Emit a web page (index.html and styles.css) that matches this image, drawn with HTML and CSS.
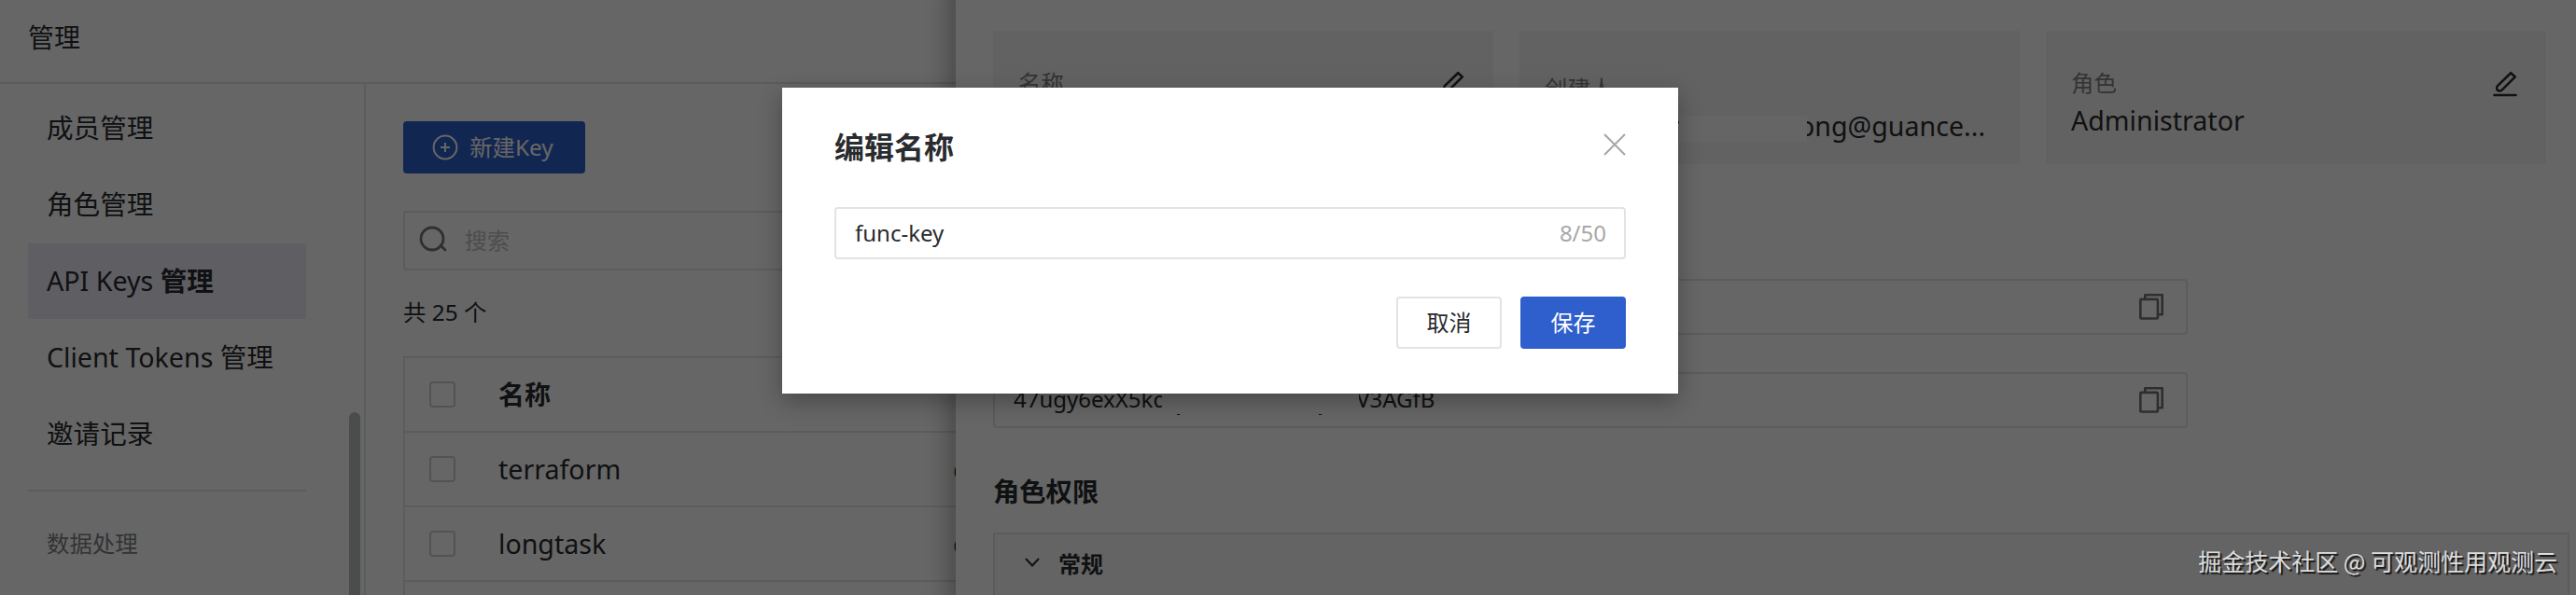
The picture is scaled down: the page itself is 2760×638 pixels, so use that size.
FILE: index.html
```html
<!DOCTYPE html>
<html lang="zh-CN">
	<head>
		<meta charset="UTF-8" />
		<meta name="viewport" content="width=device-width, initial-scale=1.0" />
		<title>API Keys 管理</title>
		<link rel="stylesheet" href="styles.css">
	</head>
	<body>
		<div class="page">
			<header class="header">管理</header>
			<div class="layout">
				<nav class="sidebar">
					<a class="menu-item">成员管理</a>
					<a class="menu-item">角色管理</a>
					<a class="menu-item active">API Keys <b>管理</b></a>
					<a class="menu-item">Client Tokens 管理</a>
					<a class="menu-item">邀请记录</a>
					<div class="menu-group">数据处理</div>
					<div class="scrollbar"></div>
				</nav>
				<main class="main">
					<button class="btn btn-primary btn-new">
						<svg width="28" height="28" viewBox="0 0 28 28" fill="none" stroke="currentColor" stroke-width="2">
							<circle cx="14" cy="14" r="12.4" />
							<path d="M9 14h10M14 9v10" />
						</svg>
						<span>新建Key</span>
					</button>
					<div class="search">
						<svg width="32" height="32" viewBox="0 0 32 32" fill="none" stroke="currentColor" stroke-width="2.8" stroke-linecap="round">
							<circle cx="15" cy="15" r="12" />
							<path d="M24 22l5 5" />
						</svg>
						<span>搜索</span>
					</div>
					<div class="total">共 25 个</div>
					<div class="table">
						<div class="row row-head"><i class="checkbox"></i><span class="cell">名称</span></div>
						<div class="row"><i class="checkbox"></i><span class="cell">terraform</span><span>c</span></div>
						<div class="row"><i class="checkbox"></i><span class="cell">longtask</span><span>c</span></div>
						<div class="row"></div>
					</div>
				</main>
			</div>
		</div>

		<aside class="drawer">
			<div class="cards">
				<div class="card">
					<div class="card-label">名称</div>
					<div class="card-value">func-key</div>
					<svg class="edit" width="26" height="28" viewBox="0 0 26 28" fill="none" stroke="currentColor" stroke-width="2.6" stroke-linejoin="round" stroke-linecap="round">
						<path d="M19.2 2.2l4.6 4.2L9.8 20.4q-1.2 1.2-3 1-2.8-.2-2.6-2.8 0-2 1.2-3z" />
						<path d="M1.5 26h23" />
					</svg>
				</div>
				<div class="card card-creator">
					<div class="card-label">创建人</div>
					<div class="card-value"><span class="card-name">r</span><span class="redacted"></span>ong@guance...</div>
				</div>
				<div class="card">
					<div class="card-label">角色</div>
					<div class="card-value">Administrator</div>
					<svg class="edit" width="26" height="28" viewBox="0 0 26 28" fill="none" stroke="currentColor" stroke-width="2.6" stroke-linejoin="round" stroke-linecap="round">
						<path d="M19.2 2.2l4.6 4.2L9.8 20.4q-1.2 1.2-3 1-2.8-.2-2.6-2.8 0-2 1.2-3z" />
						<path d="M1.5 26h23" />
					</svg>
				</div>
			</div>
			<div class="fields">
				<div class="field">
					<span></span>
					<svg class="copy" width="28" height="30" viewBox="0 0 28 30" fill="none" stroke="currentColor" stroke-width="2.6" stroke-linejoin="round">
						<path d="M7.3 6.4V2.3h18.4v21h-4.4" />
						<rect x="2.3" y="6.9" width="18.6" height="20.6" rx="1" />
					</svg>
				</div>
				<div class="field">
					<span class="key">47ugy6exX5kd<span class="mask"></span>V3AGfB</span>
					<svg class="copy" width="28" height="30" viewBox="0 0 28 30" fill="none" stroke="currentColor" stroke-width="2.6" stroke-linejoin="round">
						<path d="M7.3 6.4V2.3h18.4v21h-4.4" />
						<rect x="2.3" y="6.9" width="18.6" height="20.6" rx="1" />
					</svg>
				</div>
			</div>
			<h3 class="section-title">角色权限</h3>
			<div class="panel">
				<svg width="16" height="12" viewBox="0 0 16 12" fill="none" stroke="currentColor" stroke-width="2">
					<path d="M1 2l7 7.5L15 2" />
				</svg>
				<span>常规</span>
			</div>
		</aside>

		<div class="overlay">
			<div class="modal">
				<div class="modal-header">
					<h2>编辑名称</h2>
					<svg width="24" height="24" viewBox="0 0 24 24" fill="none" stroke="currentColor" stroke-width="2">
						<path d="M1 1l22 22M23 1L1 23" />
					</svg>
				</div>
				<div class="input">
					<span>func-key</span>
					<span class="count">8/50</span>
				</div>
				<div class="modal-footer">
					<button class="btn">取消</button>
					<button class="btn btn-primary">保存</button>
				</div>
			</div>
		</div>
		<div class="watermark">掘金技术社区 @ 可观测性用观测云</div>
	</body>
</html>
```

FILE: styles.css
```css
* {
	margin: 0;
	padding: 0;
	box-sizing: border-box;
}
body {
	position: relative;
	width: 2760px;
	height: 638px;
	overflow: hidden;
	font-family: "Noto Sans", "Noto Sans CJK SC", sans-serif;
	font-size: 24.4px;
	color: #2a2b2e;
	background: #fff;
}
svg {
	display: block;
	flex: none;
}
.page {
	height: 638px;
	display: flex;
	flex-direction: column;
	overflow: hidden;
}
.header {
	flex: none;
	height: 90px;
	padding-left: 30px;
	line-height: 81px;
	font-size: 28px;
	border-bottom: 2px solid #e6e6e6;
}
.layout {
	flex: 1;
	display: flex;
	min-height: 0;
}
.sidebar {
	position: relative;
	flex: none;
	width: 392px;
	padding: 7px 62px 0 30px;
	border-right: 2px solid #e6e6e6;
}
.menu-item {
	display: block;
	height: 82px;
	line-height: 80px;
	padding-left: 20px;
	font-size: 28.6px;
	white-space: nowrap;
}
.menu-item.active {
	height: 81px;
	margin-bottom: 1px;
	background: #ebebf8;
}
.menu-group {
	margin-top: 18px;
	padding-left: 20px;
	border-top: 2px solid #e6e6e6;
	line-height: 112px;
	color: #7d8286;
}
.scrollbar {
	position: absolute;
	right: 4px;
	top: 352px;
	bottom: -10px;
	width: 12px;
	border-radius: 6px;
	background: #bcc0c0;
}
.main {
	flex: 1;
	padding: 40px 40px 0;
}
.btn {
	display: flex;
	align-items: center;
	justify-content: center;
	width: 113px;
	height: 56px;
	padding-bottom: 3px;
	font: inherit;
	font-size: 24px;
	color: #2a2b2e;
	background: #fff;
	border: 2px solid #e3e3e3;
	border-radius: 4px;
}
.btn-primary {
	color: #fff;
	background: #2f5fcc;
	border-color: #2f5fcc;
}
.btn-new {
	width: 195px;
	gap: 12px;
	padding-right: 3px;
	font-size: 24.4px;
}
.btn-new svg {
	margin-top: 2px;
}
.search {
	display: flex;
	align-items: center;
	gap: 18px;
	height: 64px;
	margin-top: 40px;
	padding: 0 0 3px 14px;
	border: 2px solid #e6e6e6;
	border-radius: 4px;
	font-size: 24px;
	color: #c0c0c0;
}
.search svg {
	color: #75787a;
}
.total {
	height: 92px;
	line-height: 90px;
}
.table {
	border: 2px solid #e6e6e6;
}
.row {
	display: flex;
	align-items: center;
	height: 80px;
	padding-left: 26px;
	font-size: 28.6px;
	line-height: 40px;
	border-bottom: 2px solid #e6e6e6;
}
.row-head {
	font-size: 28px;
	font-weight: bold;
}
.checkbox {
	width: 28px;
	height: 28px;
	margin-right: 46px;
	border: 2px solid #cfcfcf;
	border-radius: 4px;
}
.cell {
	width: 487px;
	padding-bottom: 1px;
}
.drawer {
	position: absolute;
	top: 0;
	right: 0;
	bottom: 0;
	width: 1736px;
	padding: 33px 7px 0 40px;
	overflow: hidden;
	background: #fff;
}
.page::after {
	content: '';
	position: absolute;
	left: 1024px;
	top: -20px;
	bottom: -20px;
	width: 1736px;
	box-shadow: -6px 0 26px rgba(0,0,0,.32);
}
.cards {
	display: grid;
	grid-template-columns: repeat(3, 536px);
	gap: 28px;
}
.card {
	position: relative;
	height: 143px;
	padding: 38px 27px 0;
	background: #f6f6f6;
}
.card-creator {
	padding-top: 44px;
}
.card-label {
	height: 36px;
	line-height: 36px;
	color: #7d8286;
}
.card-value {
	display: flex;
	height: 44px;
	line-height: 44px;
	font-size: 28.6px;
	white-space: nowrap;
}
.card-name {
	width: 145px;
	text-align: right;
}
.redacted {
	position: relative;
	flex: none;
	width: 137px;
	height: 28px;
	margin: 11px -9px 0 -1px;
	background: #fcfcfc;
}
.edit {
	position: absolute;
	right: 31px;
	top: 43px;
}
.fields {
	display: grid;
	gap: 40px;
	width: 1280px;
	margin-top: 123px;
}
.field {
	display: flex;
	align-items: center;
	justify-content: space-between;
	height: 60px;
	padding: 0 23px 0 20px;
	border: 2px solid #e6e6e6;
	border-radius: 4px;
}
.copy {
	color: #707478;
}
.key {
	display: flex;
	align-items: center;
	padding-bottom: 3px;
	font-size: 24px;
}
.mask {
	position: relative;
	width: 211px;
	height: 34px;
	margin: 0 -3px 0 -5px;
	background: #fff;
}
.mask::before,
.mask::after {
	content: '';
	position: absolute;
	bottom: 0;
	left: 16px;
	width: 3px;
	height: 1px;
	background: #2a2b2e;
}
.mask::after {
	left: 168px;
}
.section-title {
	height: 112px;
	padding-top: 12px;
	line-height: 112px;
	font-size: 28.3px;
	font-weight: bold;
}
.panel {
	display: flex;
	align-items: center;
	gap: 20px;
	height: 80px;
	padding: 0 0 16px 32px;
	background: #fafafa;
	border: 2px solid #e6e6e6;
	font-size: 24px;
	font-weight: bold;
}
.overlay {
	position: absolute;
	z-index: 2;
	inset: 0;
	padding-top: 94px;
	background: rgba(0,0,0,.6);
}
.modal {
	width: 960px;
	height: 328px;
	margin-left: 838px;
	padding: 40px 56px 0;
	background: #fff;
	box-shadow: 0 8px 24px rgba(0,0,0,.3);
}
.modal-header {
	display: flex;
	justify-content: space-between;
	height: 88px;
}
.modal-header h2 {
	line-height: 47px;
	font-size: 32px;
	font-weight: bold;
}
.modal-header svg {
	margin-top: 9px;
	color: #a3a7aa;
}
.input {
	display: flex;
	align-items: center;
	justify-content: space-between;
	height: 56px;
	padding: 0 19px 1px 20px;
	border: 2px solid #e3e3e3;
	border-radius: 4px;
	font-size: 24px;
}
.count {
	color: #a8a8a8;
}
.modal-footer {
	display: flex;
	justify-content: flex-end;
	gap: 20px;
	margin-top: 40px;
}
.watermark {
	position: absolute;
	z-index: 3;
	right: 20px;
	bottom: 19px;
	line-height: 36px;
	font-family: "Noto Sans CJK SC", sans-serif;
	font-size: 25px;
	color: #dcdcdc;
	text-shadow: 2px 2px 1px rgba(0,0,0,.8);
}
```
